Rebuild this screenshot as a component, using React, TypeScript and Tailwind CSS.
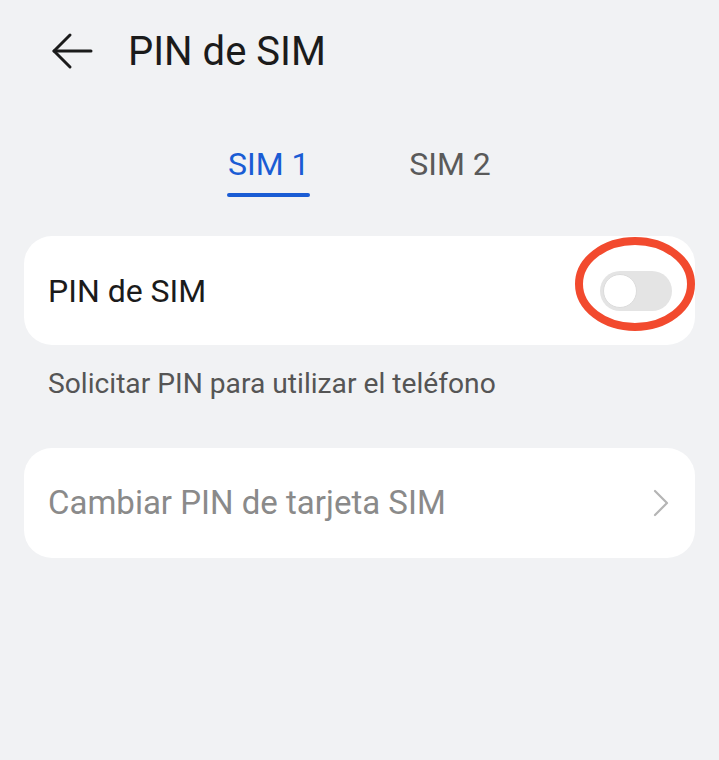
import React from "react";

export default function App() {
  return (
    <div className="w-[719px] h-[760px] bg-[#f1f2f4] overflow-hidden" style={{ fontFamily: "Roboto, 'Noto Sans', sans-serif" }}>
      <div className="h-[104px] flex items-center pl-[50px]">
        <svg width="44" height="40" viewBox="0 0 44 40" fill="none" stroke="#1b1b1b" strokeWidth="3" strokeLinecap="round" strokeLinejoin="round" className="mb-[2px]">
          <path d="M41 20H4" />
          <path d="M20 4L4 20L20 36" />
        </svg>
        <span className="ml-[34px] text-[40px] text-[#1b1b1b] leading-none">PIN de SIM</span>
      </div>
      <div className="flex justify-center gap-[99px] mt-[44px] pr-[1px]">
        <div className="flex flex-col items-center">
          <span className="text-[32px] text-[#1a5cd4] leading-none">SIM 1</span>
          <div className="w-[83px] h-[4px] rounded-full bg-[#1a5cd4] mt-[13px] mb-[3px]"></div>
        </div>
        <div className="flex flex-col items-center">
          <span className="text-[32px] text-[#5a5a5a] leading-none">SIM 2</span>
        </div>
      </div>
      <div className="mx-[24px] mt-[36px] h-[109px] bg-white rounded-[28px] flex items-center justify-between pl-[24px] pr-[24px] relative">
        <span className="text-[32px] text-[#1b1b1b]">PIN de SIM</span>
        <div className="w-[72px] h-[40px] rounded-full bg-[#e4e4e4] flex items-center p-[3px] mr-[-1px]">
          <div className="w-[34px] h-[34px] rounded-full bg-white border border-[#dcdcdc]"></div>
        </div>
        <svg className="absolute" style={{ left: 549, top: 0 }} width="124" height="98" viewBox="0 0 124 98">
          <ellipse cx="62" cy="48" rx="56" ry="43" fill="none" stroke="#f24a2e" strokeWidth="8" />
        </svg>
      </div>
      <div className="px-[48px] pt-[25px] text-[28.2px] text-[#555555] leading-none">Solicitar PIN para utilizar el teléfono</div>
      <div className="mx-[24px] mt-[50px] h-[110px] bg-white rounded-[28px] flex items-center justify-between pl-[24px] pr-[26px]">
        <span className="text-[33px] text-[#8a8a8a]">Cambiar PIN de tarjeta SIM</span>
        <svg width="16" height="28" viewBox="0 0 16 28" fill="none" stroke="#b5b5b5" strokeWidth="2.2" strokeLinecap="round" strokeLinejoin="round">
          <path d="M2 2L14 14L2 26" />
        </svg>
      </div>
    </div>
  );
}
